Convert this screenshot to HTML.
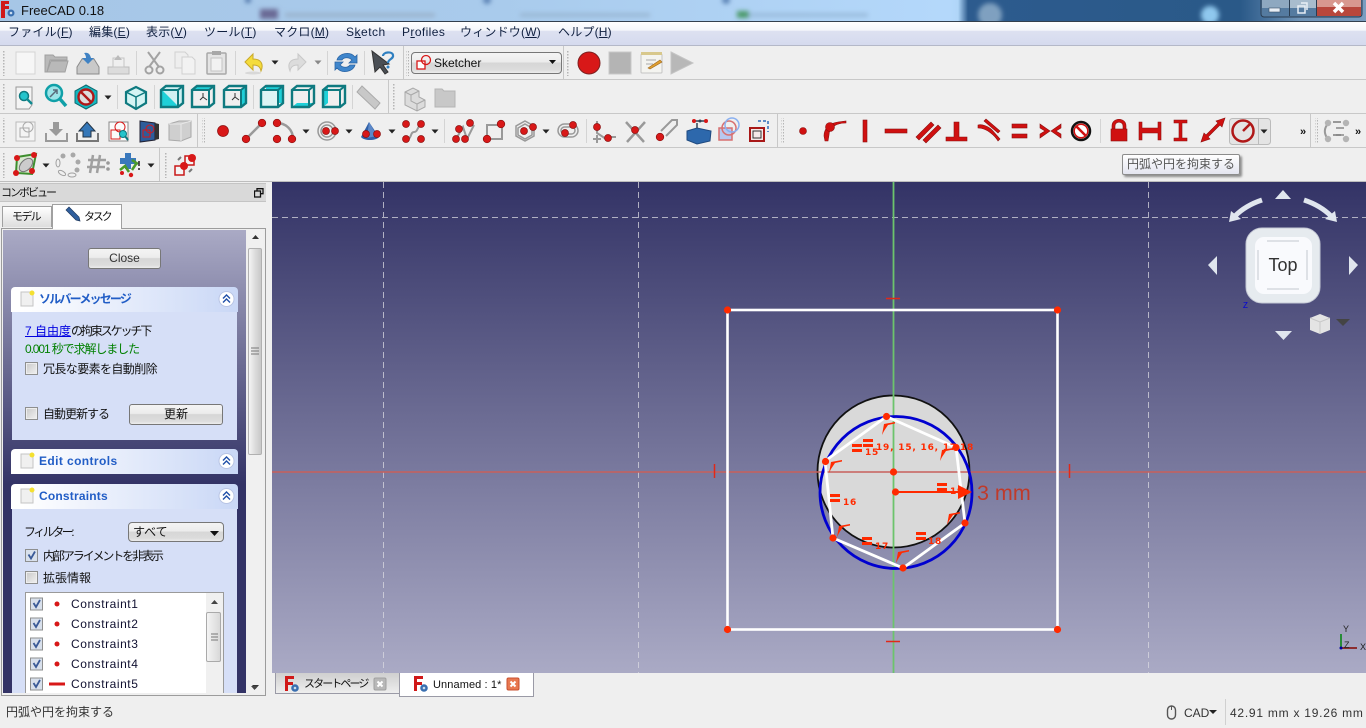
<!DOCTYPE html>
<html lang="ja"><head><meta charset="utf-8"><title>FreeCAD 0.18</title>
<style>
html,body{margin:0;padding:0;width:1366px;height:728px;overflow:hidden;background:#efefef}
body{position:relative;font-family:"Liberation Sans","Noto Sans CJK JP",sans-serif;font-size:12px;color:#111}
.a{position:absolute}
.t{position:absolute;white-space:nowrap;line-height:16px}
u{text-decoration:underline}
.m{color:#102040;letter-spacing:.2px}
.btn{position:absolute;box-sizing:border-box;border:1px solid #777;border-radius:3px;background:linear-gradient(#f4f4f4,#ececec 45%,#d6d6d6 50%,#dcdcdc 85%,#ececec);text-align:center;font-size:12px}
.cb{position:absolute;box-sizing:border-box;width:13px;height:13px;border:1px solid #8e8f8f;background:linear-gradient(135deg,#c8c8c8,#f2f2f2);outline:1px solid #eee;outline-offset:-2px}
.hd{position:absolute;left:11px;width:227px;height:25px;box-sizing:border-box;background:linear-gradient(90deg,#fff 5%,#c9d7f6);border-radius:4px 4px 0 0;color:#215dc6;font-weight:bold;font-size:12px;line-height:24px;padding-left:28px}
.bd{position:absolute;left:12px;width:225px;background:#d6dff7}
.c{font-size:12px;letter-spacing:.55px;color:#101030}
</style></head><body>

<!-- title bar -->
<div class="a" style="left:0;top:0;width:1366px;height:21px;background:linear-gradient(90deg,#a6c6e6 0,#a9cbec 500px,#b4d8fb 950px,#b0d6f8 958px,#2d5b8e 968px,#2a5988 1240px,#6f94b8 1300px,#7a9dc0 1366px)"></div>
<svg class="a" style="left:0;top:0" width="1366" height="21" viewBox="0 0 1366 21">
<defs><filter id="bl"><feGaussianBlur stdDeviation="2.500"/></filter></defs>
<g filter="url(#bl)">
<rect x="260" y="9" width="18" height="10" fill="#6a6a95"/>
<rect x="285" y="13" width="150" height="4" fill="#9ab2cc"/>
<rect x="520" y="13" width="130" height="4" fill="#9ab8d4"/>
<rect x="738" y="13" width="130" height="4" fill="#9abcdc"/>
<rect x="737" y="11" width="12" height="7" fill="#4b9a6b"/>
<circle cx="990" cy="15" r="12" fill="#7fa0c0"/>
<circle cx="1210" cy="15" r="9" fill="#8fc8ee"/>
<circle cx="248" cy="0" r="3" fill="#4a70a5"/><circle cx="487" cy="0" r="4" fill="#5b83b5"/><circle cx="726" cy="0" r="4" fill="#5b83b5"/>
</g>
<rect x="1261" y="-3" width="101" height="20" rx="3" fill="#557ba0" stroke="#2a3d52"/>
<rect x="1262" y="0" width="28" height="8" fill="#8ea8c0"/><rect x="1290" y="0" width="27" height="8" fill="#a8bccd"/>
<rect x="1317" y="0" width="44" height="16" fill="#b8473c"/><rect x="1317" y="0" width="44" height="7" fill="#d8988f"/>
<line x1="1289.500" y1="0" x2="1289.500" y2="16" stroke="#2a3d52"/><line x1="1316.500" y1="0" x2="1316.500" y2="16" stroke="#2a3d52"/>
<rect x="1269" y="8" width="11" height="4" fill="#e8eef5" stroke="#3a5068" stroke-width=".6"/>
<rect x="1298" y="6" width="7" height="7" fill="none" stroke="#e8eef5" stroke-width="1.500"/><path d="M1301 3h6v7" fill="none" stroke="#e8eef5" stroke-width="1.500"/>
<path d="M1334 3l9 9M1343 3l-9 9" stroke="#fff" stroke-width="3.500"/>
<path d="M1 1h8v3H5v2h4v3H5v9H1z" fill="#d01818"/><circle cx="11" cy="13" r="3.500" fill="#3a70b0"/><circle cx="11" cy="13" r="1.300" fill="#cde"/>
</svg>
<div class="t" style="left:21px;top:3px;font-size:13px;color:#111">FreeCAD 0.18</div>
<div class="a" style="left:0;top:21px;width:1366px;height:1px;background:#33404f"></div>

<!-- menu -->
<div class="a" style="left:0;top:22px;width:1366px;height:23px;background:linear-gradient(#fff,#f4f6fb 36%,#dde1f1 40%,#d5daee)"></div>
<div class="a" style="left:0;top:45px;width:1366px;height:1px;background:#b4b8c8"></div>
<div class="t m" style="left:8px;top:24px">ファイル(<u>F</u>)</div>
<div class="t m" style="left:89px;top:24px">編集(<u>E</u>)</div>
<div class="t m" style="left:146px;top:24px">表示(<u>V</u>)</div>
<div class="t m" style="left:204px;top:24px">ツール(<u>T</u>)</div>
<div class="t m" style="left:274px;top:24px">マクロ(<u>M</u>)</div>
<div class="t m" style="left:346px;top:24px;letter-spacing:.5px">S<u>k</u>etch</div>
<div class="t m" style="left:402px;top:24px;letter-spacing:.4px">P<u>r</u>ofiles</div>
<div class="t m" style="left:460px;top:24px">ウィンドウ(<u>W</u>)</div>
<div class="t m" style="left:558px;top:24px">ヘルプ(<u>H</u>)</div>

<!-- toolbars -->
<svg class="a" style="left:0;top:46px" width="1366" height="136" viewBox="0 46 1366 136">
<defs>
<pattern id="hp" width="3" height="3" patternUnits="userSpaceOnUse"><rect width="1.500" height="1.500" fill="#b5b5b5"/></pattern>
<g id="arr"><path d="M-3.500-1.500h7L0 2.500z" fill="#222"/></g>
<g id="grr"><path d="M-3.500-1.500h7L0 2.500z" fill="#888"/></g>
<g id="cube"><path d="M-11-7L-6-11H11V6L6 10H-11z" fill="none" stroke="#0f7a80" stroke-width="2.400"/><path d="M-11-7H6V10M6-7L11-11" fill="none" stroke="#0f7a80" stroke-width="2"/></g>
</defs>
<rect x="0" y="79" width="1366" height="1" fill="#c8c8c8"/>
<rect x="0" y="113" width="1366" height="1" fill="#c8c8c8"/>
<rect x="0" y="147" width="1366" height="1" fill="#c8c8c8"/>
<rect x="0" y="181" width="1366" height="1" fill="#bdbdbd"/>
<g fill="#c8c8c8">
<rect x="403" y="46" width="1" height="33"/><rect x="563" y="46" width="1" height="33"/>
<rect x="388" y="80" width="1" height="33"/><rect x="197" y="114" width="1" height="33"/>
<rect x="777" y="114" width="1" height="33"/><rect x="1310" y="114" width="1" height="33"/><rect x="159" y="148" width="1" height="33"/>
</g>
<g fill="url(#hp)">
<rect x="3" y="50" width="3" height="26"/><rect x="406" y="50" width="3" height="26"/><rect x="567" y="50" width="3" height="26"/>
<rect x="3" y="84" width="3" height="26"/><rect x="392" y="84" width="3" height="26"/>
<rect x="3" y="118" width="3" height="26"/><rect x="202" y="118" width="3" height="26"/><rect x="781" y="118" width="3" height="26"/><rect x="1315" y="118" width="3" height="26"/>
<rect x="3" y="152" width="3" height="26"/><rect x="164" y="152" width="3" height="26"/>
</g>
<g fill="#d4d4d4">
<rect x="136" y="51" width="1" height="24"/><rect x="235" y="51" width="1" height="24"/><rect x="327" y="51" width="1" height="24"/><rect x="364" y="51" width="1" height="24"/>
<rect x="117" y="85" width="1" height="24"/><rect x="154" y="85" width="1" height="24"/><rect x="253" y="85" width="1" height="24"/><rect x="352" y="85" width="1" height="24"/>
<rect x="444" y="119" width="1" height="24"/><rect x="586" y="119" width="1" height="24"/><rect x="1100" y="119" width="1" height="24"/>
</g>

<!-- row 1 -->
<rect x="16" y="52" width="19" height="22" fill="#f6f6f6" stroke="#d4d4d4"/>
<path d="M45 72V55h8l2 2h12v3H50l-3 12zM47 72l4-11h17l-3 11z" fill="#b9b9b9" stroke="#a0a0a0"/>
<path d="M77 67l5-8h12l5 8v7H77z" fill="#c9c9c9" stroke="#8b8b8b"/><path d="M84 53c4-1 6 1 7 5h3l-6 6-6-6h4c0-2-1-4-2-5z" fill="#3f82c4"/>
<path d="M108 67h21v7h-21z" fill="#dcdcdc" stroke="#bbb"/><path d="M113 58h11v9h-11z" fill="#efefef" stroke="#c4c4c4"/><path d="M118 55l4 5h-8z" fill="#bbb"/>
<g fill="none" stroke="#a3a3a3" stroke-width="2"><path d="M148 52l11 15M160 52l-11 15"/><circle cx="149" cy="70" r="3.500"/><circle cx="160" cy="70" r="3.500"/></g>
<path d="M175 52h10l3 3v13h-13z" fill="#eee" stroke="#d0d0d0"/><path d="M182 57h10l3 3v14h-13z" fill="#f2f2f2" stroke="#d0d0d0"/>
<rect x="207" y="53" width="19" height="21" rx="1" fill="#e4e4e4" stroke="#a8a8a8" stroke-width="1.500"/><rect x="211" y="58" width="11" height="13" fill="#f2f2f2" stroke="#c4c4c4"/><rect x="212" y="51" width="9" height="4" fill="#a8a8a8"/>
<path d="M245 62l8-8v5c8 0 11 5 8 12-1-5-4-6-8-6v5z" fill="#f4dc3c" stroke="#c9a92a"/><ellipse cx="253" cy="73" rx="8" ry="1.500" fill="#d8d8d8"/>
<use href="#arr" x="275" y="62"/>
<path d="M306 62l-8-8v5c-8 0-11 5-8 12 1-5 4-6 8-6v5z" fill="#dcdcdc" stroke="#c8c8c8"/>
<use href="#grr" x="318" y="62"/>
<path d="M337 60c2-7 13-9 18-3l2-2v8h-8l3-3c-3-3-8-3-10 0zM355 65c-2 7-13 9-18 3l-2 2v-8h8l-3 3c3 3 8 3 10 0z" fill="#3f86cc" stroke="#2a64a4" stroke-width=".8"/>
<path d="M372 51l3 21 5-5 5 7 3-2-5-7 6-1z" fill="#4a4f55" stroke="#333"/><path d="M383 56c0-4 9-5 10-1 1 4-5 4-5 8" fill="none" stroke="#2f7fc0" stroke-width="2.200"/><circle cx="388" cy="67" r="1.500" fill="#2f7fc0"/>
<circle cx="589" cy="63" r="11" fill="#d81818" stroke="#7d2020"/>
<rect x="609" y="52" width="22" height="22" fill="#b4b4b4" stroke="#c8c8c8"/>
<rect x="641" y="54" width="21" height="19" rx="1" fill="#f4f4f0" stroke="#c4c4c4"/><rect x="641" y="52" width="21" height="3" fill="#d8c88c"/><path d="M646 60h10M646 64h7" stroke="#aaa"/><path d="M648 68l12-8 2 2-12 7z" fill="#e0a030" stroke="#a06a20" stroke-width=".6"/>
<path d="M671 52l22 11-22 11z" fill="#b8b8b8" stroke="#c4c4c4"/>

<!-- row 2 -->
<path d="M16 87h16v18l-3 4H16z" fill="#f4f4f4" stroke="#999"/><circle cx="24" cy="96" r="4.500" fill="#25c4cc" stroke="#0f7a80" stroke-width="1.500"/><path d="M27 99l5 5" stroke="#0f8a90" stroke-width="2.500"/>
<circle cx="54" cy="93" r="8" fill="#9ce4e8" stroke="#10a0a8" stroke-width="2.500"/><path d="M60 99l6 7" stroke="#10a0a8" stroke-width="3.500"/><path d="M50 97l7-7M53 90h4v4" stroke="#5a6a7a" fill="none" stroke-width="1.500"/>
<path d="M86 85l11 6v12l-11 6-11-6V91z" fill="#12b8c0" stroke="#0f6a70"/><circle cx="86" cy="97" r="7.500" fill="#ddd" stroke="#b01818" stroke-width="2.400"/><path d="M81 92l10 10" stroke="#b01818" stroke-width="2.400"/>
<use href="#arr" x="108" y="97"/>
<path d="M136 87l10 5v11l-10 6-10-6V92z" fill="#d4f4f4" stroke="#0f7a80" stroke-width="2.200"/><path d="M136 97l-10-5M136 97l10-5M136 97v12" stroke="#0f7a80" stroke-width="1.500"/>
<g transform="translate(172 97)"><path d="M-10-7H7V10H-10z" fill="#1fd0d8"/><path d="M-10-7L-5-11H11V6L7 10" fill="#d0f0f2"/><use href="#cube"/></g>
<g transform="translate(203 97)"><path d="M-11-7L-6-11H11L6-7z" fill="#1fd0d8"/><use href="#cube"/><path d="M-3 3l3-3 4 3M0 0v-4" stroke="#333" fill="none"/></g>
<g transform="translate(235 97)"><path d="M6-7L11-11V6L6 10z" fill="#1fd0d8"/><use href="#cube"/><path d="M-3 3l3-3 4 3M0 0v-4" stroke="#333" fill="none"/></g>
<g transform="translate(272 97)"><path d="M-6-11H11V6H-6z" fill="#1fd0d8"/><rect x="-11" y="-7" width="17" height="17" fill="#ddf4f4"/><use href="#cube"/></g>
<g transform="translate(303 97)"><path d="M-11 10L-6 6H11L6 10z" fill="#1fd0d8"/><use href="#cube"/></g>
<g transform="translate(334 97)"><path d="M-11-7L-6-11V6L-11 10z" fill="#1fd0d8"/><use href="#cube"/></g>
<path d="M362 86l18 17-5 6-18-17z" fill="#c8c8c8" stroke="#aaa"/>
<path d="M405 92l8-4 6 3v6l6 3v7l-8 4-12-6z" fill="#dcdcdc" stroke="#a8a8a8"/><path d="M405 92l6 3v6l6 3v7M411 95l8-4M417 104l8-4" fill="none" stroke="#a8a8a8"/>
<path d="M435 89h7l2 2h11v16h-20z" fill="#c8c8c8" stroke="#b4b4b4"/>

<!-- row 3 -->
<rect x="16" y="122" width="19" height="19" fill="#f4f4f4" stroke="#bbb"/><rect x="20" y="128" width="9" height="9" fill="none" stroke="#aaa"/><circle cx="28" cy="127" r="5" fill="none" stroke="#aaa"/>
<path d="M53 122h6v7h4l-7 7-7-7h4z" fill="#9a9a9a"/><path d="M46 133v8h21v-8" fill="none" stroke="#9a9a9a" stroke-width="2"/>
<path d="M83 131h-4l8-9 8 9h-4v6h-8z" fill="#3577b8" stroke="#234"/><path d="M77 133v8h21v-8" fill="none" stroke="#777" stroke-width="2"/>
<rect x="109" y="122" width="19" height="19" fill="#fbfbfb" stroke="#888"/><rect x="111" y="130" width="9" height="9" fill="none" stroke="#d81818"/><circle cx="120" cy="127" r="5" fill="none" stroke="#d81818"/><circle cx="123" cy="134" r="3.500" fill="#25c4cc" stroke="#0f7a80"/><path d="M125 136l3 4" stroke="#0f7a80" stroke-width="2"/>
<path d="M140 121l15 2v17l-15 2z" fill="#2e5c9a" stroke="#223"/><path d="M155 123l4 1v15l-4 1z" fill="#333"/><rect x="143" y="130" width="7" height="7" fill="none" stroke="#d81818"/><circle cx="150" cy="129" r="4" fill="none" stroke="#d81818"/>
<path d="M169 124l10-3h12v16l-10 4-12-1z" fill="#cfcfcf" stroke="#aaa"/><path d="M169 124h12v17M181 124l10-3" fill="none" stroke="#e8e8e8"/>
<g stroke="#999" fill="none" stroke-width="1.500">
<path d="M246 139l16-16" stroke-width="2.500"/><path d="M277 123c8 0 16 6 16 16" stroke-width="2.500"/>
<circle cx="327" cy="131" r="9" stroke-width="1.500"/><circle cx="327" cy="131" r="6"/>
<path d="M407 139c5 0 3-7 7-7s3-5 7-8" stroke-width="2"/>
<path d="M456 139l7-12 4 12 7-14" stroke-width="2"/><rect x="487" y="125" width="15" height="14" stroke-width="2"/>
<path d="M525 121l9 5v10l-9 5-9-5v-10z"/><path d="M525 124l7 4v7l-7 4-7-4v-7z"/>
<rect x="558" y="124" width="20" height="13" rx="6.500"/><rect x="561" y="127" width="14" height="7" rx="3.500"/>
<path d="M597 121v12l9 6M593 139h8M597 135v8" stroke-width="2"/><path d="M607 137h9" stroke-width="2"/>
<path d="M626 122l18 20M645 122l-18 20" stroke-width="2.500"/>
<path d="M661 131l11-11h5v5l-11 11" stroke-width="2"/>
</g>
<path d="M369 122l-8 15c3 4 15 4 18 0z" fill="#3060a8"/><path d="M369 122l-2 16 10-2z" fill="#5c88c8"/>
<g fill="#d81818" stroke="#8a1010" stroke-width=".7">
<circle cx="223" cy="131" r="5.500"/><circle cx="246" cy="139" r="3.800"/><circle cx="262" cy="123" r="3.800"/>
<circle cx="277" cy="123" r="3.800"/><circle cx="277" cy="139" r="3.800"/><circle cx="292" cy="139" r="3.800"/>
<circle cx="326" cy="131" r="3.500"/><circle cx="335" cy="131" r="3.500"/>
<circle cx="366" cy="134" r="3.500"/><circle cx="377" cy="134" r="3.500"/>
<circle cx="406" cy="139" r="3.500"/><circle cx="406" cy="124" r="3.500"/><circle cx="421" cy="124" r="3.500"/><circle cx="421" cy="139" r="3.500"/>
<circle cx="456" cy="139" r="3.500"/><circle cx="459" cy="129" r="3.500"/><circle cx="470" cy="123" r="3.500"/><circle cx="465" cy="139" r="3.500"/>
<circle cx="487" cy="139" r="3.800"/><circle cx="501" cy="124" r="3.800"/>
<circle cx="524" cy="131" r="3.500"/><circle cx="533" cy="127" r="3.500"/>
<circle cx="565" cy="133" r="3.500"/><circle cx="573" cy="125" r="3.500"/>
<circle cx="597" cy="127" r="3.500"/><circle cx="608" cy="138" r="3.500"/>
<circle cx="635" cy="130" r="3.500"/><circle cx="660" cy="137" r="3.800"/>
</g>
<path d="M687 131l10-3 14 3-1 10-13 3-10-4z" fill="#2d68ac" stroke="#1f4a80"/><path d="M697 128v-5M692 121h14" stroke="#345" stroke-width="1.500"/><circle cx="694" cy="121" r="2" fill="#d81818"/><circle cx="706" cy="121" r="2" fill="#d81818"/><circle cx="700" cy="121" r="1.500" fill="#345"/>
<rect x="719" y="128" width="13" height="12" fill="#b8c8f0" stroke="#d87070" stroke-width="1.500"/><circle cx="729" cy="128" r="7" fill="none" stroke="#d87070" stroke-width="1.500"/><circle cx="732" cy="125" r="7" fill="none" stroke="#8ab0f0" stroke-width="1.500"/>
<rect x="750" y="128" width="14" height="13" fill="#f4e8e8" stroke="#a81818" stroke-width="2"/><rect x="753" y="131" width="8" height="7" fill="none" stroke="#333"/><path d="M758 121h10v11" fill="none" stroke="#2e6cb8" stroke-width="1.500" stroke-dasharray="3 2"/>
<use href="#arr" x="306" y="131"/><use href="#arr" x="349" y="131"/><use href="#arr" x="392" y="131"/><use href="#arr" x="435" y="131"/><use href="#arr" x="546" y="131"/>

<!-- constraints -->
<g fill="#d01010" stroke="#8a1010" stroke-width=".6">
<circle cx="803" cy="131" r="3.500"/>
<path d="M825 141l-1-5c0-8 6-13 14-14l8-1v2c-9 0-17 4-17 12l-1 6z"/><circle cx="830" cy="127" r="4.500"/>
<rect x="863" y="120" width="4" height="22"/>
<rect x="885" y="129" width="22" height="4"/>
<path d="M916 137l15-15 3 3-15 15zM923 140l15-15 3 3-15 15z" />
<path d="M946 137h8v-15h5v15h8v4h-21z"/>
<path d="M978 125c4-1 10 1 14 5l8 9-2 2c-3-5-11-13-20-13z"/><path d="M984 121l14 12 2-2-14-12z"/>
<rect x="1012" y="124" width="15" height="4"/><rect x="1012" y="134" width="15" height="4"/>
<path d="M1040 124l10 7-10 7v-4l5-3-5-3zM1061 124l-10 7 10 7v-4l-5-3 5-3z"/>
</g>
<circle cx="1081" cy="131" r="9" fill="#fff" stroke="#111" stroke-width="2.500"/><circle cx="1081" cy="131" r="6.800" fill="none" stroke="#d01010" stroke-width="1.500"/><path d="M1076 126l10 10" stroke="#d01010" stroke-width="2.500"/>
<g fill="#d01010" stroke="#8a1010" stroke-width=".6">
<path d="M1112 129v-3c0-9 14-9 14 0v3h-3v-3c0-5-8-5-8 0v3z"/><rect x="1111" y="129" width="16" height="12"/>
<path d="M1139 122h3v6h16v-6h3v18h-3v-7h-16v7h-3z"/>
<path d="M1174 120h13v3h-5v15h5v3h-13v-3h5v-15h-5z"/>
<path d="M1201 142l3-9 2 2 12-12-2-2 9-3-3 9-2-2-12 12 2 2z"/>
</g>
<rect x="1229.500" y="118.500" width="41" height="26" rx="3" fill="#e4e4e4" stroke="#bbb"/><line x1="1258.500" y1="118" x2="1258.500" y2="145" stroke="#bbb"/>
<circle cx="1243" cy="131" r="10.500" fill="none" stroke="#b01818" stroke-width="2.500"/><path d="M1243 131l8-8" stroke="#b01818" stroke-width="2.500"/>
<use href="#arr" x="1264" y="131"/>
<g fill="none" stroke="#999" stroke-width="2"><path d="M1327 125c-3 4-3 8 0 13M1333 122h8M1333 135h8" /></g>
<g fill="#b4b4b4"><circle cx="1328" cy="123" r="3.200"/><circle cx="1346" cy="123" r="3.200"/><circle cx="1328" cy="139" r="3.200"/><circle cx="1346" cy="139" r="3.200"/></g>
<path d="M1336 128h8M1336 135h8" stroke="#888" stroke-width="1.500"/>

<!-- row 4 -->
<path d="M17 157l19-3-4 20-16-1z" fill="#d8e8d0" stroke="#3e8e2e" stroke-width="2"/><ellipse cx="26" cy="165" rx="8" ry="5" transform="rotate(-45 26 165)" fill="#ccc" stroke="#777"/>
<g fill="#d81818"><circle cx="17" cy="158" r="3"/><circle cx="34" cy="155" r="3"/><circle cx="32" cy="171" r="3"/><circle cx="16" cy="173" r="3"/></g>
<use href="#arr" x="46" y="165"/>
<g fill="#f0f0f0" stroke="#a0a0a0"><ellipse cx="58" cy="163" rx="2" ry="4"/><ellipse cx="62" cy="173" rx="4" ry="2" transform="rotate(30 62 173)"/><ellipse cx="72" cy="175" rx="4" ry="2"/></g>
<g fill="#a8a8a8"><circle cx="63" cy="156" r="2.500"/><circle cx="73" cy="155" r="2.500"/><circle cx="78" cy="162" r="2.500"/><circle cx="77" cy="170" r="2.500"/></g>
<path d="M93 155l-3 18M100 155l-3 18M88 160h18M87 167h18" stroke="#a0a0a0" stroke-width="2.500"/><circle cx="108" cy="163" r="1.800" fill="#999"/><circle cx="108" cy="169" r="1.800" fill="#999"/>
<path d="M125 153h6v5h5v6h-5v5h-6v-5h-5v-6h5z" fill="#3a78bc"/><path d="M120 170l5-4 4 6M132 160l6 4M132 170l4-6" stroke="#4a9a2a" stroke-width="2.500" fill="none"/><circle cx="131" cy="175" r="2.200" fill="#d81818"/><circle cx="122" cy="173" r="2" fill="#d81818"/><path d="M139 161v5" stroke="#222" stroke-width="1.500"/><circle cx="139" cy="169" r="1" fill="#222"/>
<use href="#arr" x="151" y="165"/>
<rect x="175" y="166" width="9" height="9" fill="#f4f4f4" stroke="#c81818" stroke-width="1.500"/><rect x="185" y="156" width="9" height="9" fill="#f4f4f4" stroke="#c81818" stroke-width="1.500"/><circle cx="184" cy="166" r="4" fill="#d81818"/><circle cx="192" cy="158" r="4" fill="#d81818"/><path d="M178 160l3-3M189 172l3-3" stroke="#777" stroke-width="2"/>
<g font-family="Liberation Sans" font-weight="bold" font-size="11"><text x="1300" y="135" fill="#111">»</text><text x="1355" y="135" fill="#111">»</text></g>
</svg>

<!-- workbench combo -->
<div class="btn" style="left:411px;top:52px;width:151px;height:22px;border-radius:4px;text-align:left;padding-left:22px;line-height:20px">Sketcher</div>
<svg class="a" style="left:415px;top:54px" width="150" height="18" viewBox="415 54 150 18"><rect x="417" y="61" width="8" height="8" fill="#fff" stroke="#d81818" stroke-width="1.300"/><circle cx="426" cy="60" r="4.500" fill="none" stroke="#d81818" stroke-width="1.300"/><path d="M549 60h7l-3.500 4z" fill="#111"/></svg>

<!-- viewport -->
<div class="a" style="left:272px;top:182px;width:1094px;height:491px;background:linear-gradient(#333366,#aaaac5)"></div>
<svg class="a" style="left:272px;top:182px" width="1094" height="491" viewBox="272 182 1094 491">
<defs>
<path id="eq" d="M0 0h10v3H0zM0 5h10v3H0z"/>
<path id="pm" d="M0 13L2 2 13 0V1.500L6 3 2 9z"/>
</defs>
<g stroke="#d8d8e0" stroke-width="1" stroke-dasharray="6 4" fill="none" opacity=".75">
<path d="M272 217.500H1366"/><path d="M383.500 182V673M638.500 182V673M1148.500 182V673"/>
</g>
<circle cx="893.500" cy="471.500" r="76" fill="#d9d9d9" stroke="#111" stroke-width="1.800"/>
<path d="M272 472H1366" stroke="#c8605c" stroke-width="1.500"/>
<path d="M893.500 182V673" stroke="#6cc46c" stroke-width="1.800"/>
<rect x="727.500" y="310" width="330" height="319.500" fill="none" stroke="#fff" stroke-width="2.600"/>
<path d="M886 298.500h14M886 641.500h14M714.500 464v14M1069.500 464v14" stroke="#e02818" stroke-width="1.500"/>
<circle cx="896" cy="492.500" r="76" fill="none" stroke="#0000d0" stroke-width="2.800"/>
<path d="M886.500 416.500L956 447.500 965 523 903 568 833 538 825 461z" fill="none" stroke="#fff" stroke-width="2.800"/>
<g fill="#ff2a00">
<circle cx="727.500" cy="310" r="3.600"/><circle cx="1057.500" cy="310" r="3.600"/><circle cx="727.500" cy="629.500" r="3.600"/><circle cx="1057.500" cy="629.500" r="3.600"/>
<circle cx="886.500" cy="416.500" r="3.600"/><circle cx="956" cy="447.500" r="3.600"/><circle cx="965" cy="523" r="3.600"/><circle cx="903" cy="568" r="3.600"/><circle cx="833" cy="538" r="3.600"/><circle cx="825.500" cy="461.500" r="3.600"/>
<circle cx="893.500" cy="472" r="3.600"/><circle cx="895.500" cy="492" r="3.600"/>
<path d="M958 485l14 7-14 7z"/>
<use href="#eq" x="863" y="439"/><use href="#eq" x="852" y="444"/><use href="#eq" x="830" y="494"/><use href="#eq" x="862" y="537"/><use href="#eq" x="916" y="532"/><use href="#eq" x="937" y="483"/>
<use href="#pm" x="882" y="422"/><use href="#pm" x="940" y="448"/><use href="#pm" x="829" y="460"/><use href="#pm" x="837" y="524"/><use href="#pm" x="896" y="550"/><use href="#pm" x="947" y="512"/>
</g>
<path d="M895.500 492H960" stroke="#ff2a00" stroke-width="2"/>
<g font-family="DejaVu Sans,Liberation Sans" font-weight="bold" font-size="9" fill="#ff2a00" letter-spacing=".8">
<text x="865" y="455">15</text><text x="876" y="450">19, 15, 16, 17</text><text x="960" y="450">18</text><text x="843" y="505">16</text><text x="875" y="549">17</text><text x="928" y="544">18</text><text x="950" y="494">19</text>
</g>
<text x="977" y="500" font-family="Liberation Sans" font-size="21.500" fill="#c03a2a">3 mm</text>

<!-- navicube -->
<rect x="1246" y="228" width="74" height="75" rx="16" fill="#e6ebef" stroke="#c4c8d4"/>
<rect x="1255" y="237" width="57" height="57" rx="9" fill="#f9fafd"/>
<g stroke="#c4c8d0" fill="none"><path d="M1267 241h32M1267 289h32" /><path d="M1258 250v30M1307 250v30"/></g>
<text x="1283" y="271" text-anchor="middle" font-family="Liberation Sans" font-size="18" fill="#333">Top</text>
<g fill="#e0e6ee">
<path d="M1275 199l8-9 8 9z"/><path d="M1275 331h17l-8.500 9z"/><path d="M1217 256l-9 9 9 10z"/><path d="M1349 256l9 9-9 10z"/>
<path d="M1229 222l2-11 10 8z"/><path d="M1337 222l-2-11-10 8z"/>
</g>
<path d="M1262 200C1250 204 1242 209 1235 216M1304 200C1316 204 1324 209 1331 216" fill="none" stroke="#e0e6ee" stroke-width="5"/>
<text x="1243" y="308" font-family="Liberation Sans" font-size="8" fill="#0000d8">Z</text>
<path d="M1310 318l10-4 10 4v12l-10 4-10-4z" fill="#e4e4e4"/><path d="M1310 318l10 4 10-4M1320 322v12" stroke="#c8c8c8" fill="none"/>
<path d="M1336 319h14l-7 7z" fill="#444"/>
<!-- axis cross -->
<path d="M1341 648v-14" stroke="#1a8a2a" stroke-width="1.800"/><path d="M1341 648h16" stroke="#8a2020" stroke-width="1.800"/><circle cx="1341" cy="648" r="1.500" fill="#0000a0"/>
<g font-family="Liberation Sans" font-size="9" fill="#222"><text x="1343" y="632">Y</text><text x="1360" y="650">X</text><text x="1344" y="648">Z</text></g>
</svg>

<!-- tooltip -->
<div class="a" style="left:1122px;top:154px;width:118px;height:21px;box-sizing:border-box;border:1px solid #8c8c8c;border-radius:2px;background:linear-gradient(#fff,#e4e5f0);box-shadow:2px 2px 2px rgba(60,60,60,.55);font-size:12px;line-height:19px;color:#555;text-align:center;white-space:nowrap">円弧や円を拘束する</div>

<!-- left panel -->
<div class="a" style="left:0;top:183px;width:266px;height:19px;background:#d9d9d9;border:1px solid #c4c4c4;border-width:1px 0;box-sizing:border-box"></div>
<div class="t" style="left:1px;top:185px;font-size:11px;letter-spacing:-2px">コンボビュー</div>
<svg class="a" style="left:254px;top:188px" width="10" height="10"><rect x=".5" y="3" width="6" height="6" fill="none" stroke="#111" stroke-width="1.300"/><path d="M3 2.500V.7h6v5H7" fill="none" stroke="#111" stroke-width="1.300"/></svg>
<div class="a" style="left:2px;top:206px;width:50px;height:21px;box-sizing:border-box;border:1px solid #a0a0a0;border-bottom:0;background:linear-gradient(#fff,#ddd)"></div>
<div class="t" style="left:12px;top:209px;font-size:11px;letter-spacing:-1.700px">モデル</div>
<div class="a" style="left:52px;top:204px;width:70px;height:25px;box-sizing:border-box;border:1px solid #a0a0a0;border-bottom:0;background:#fff;z-index:2"></div>
<svg class="a" style="left:64px;top:206px;z-index:3" width="18" height="18"><path d="M2 4l3-3 10 10 1 4-4-1z" fill="#2f5f9e" stroke="#1f3a60" stroke-width=".7"/></svg>
<div class="t" style="left:84px;top:209px;font-size:11px;letter-spacing:-2.200px;z-index:3">タスク</div>
<div class="a" style="left:1px;top:228px;width:265px;height:468px;box-sizing:border-box;border:1px solid #9c9c9c;background:#efefef"></div>
<div class="a" style="left:3px;top:230px;width:243px;height:463px;background:linear-gradient(#aaaac5,#333366 55%,#333366)"></div>
<!-- scrollbar -->
<div class="a" style="left:247px;top:230px;width:16px;height:463px;background:#f0f0f0"></div>
<div class="a" style="left:248px;top:248px;width:14px;height:207px;box-sizing:border-box;border:1px solid #b0b0b0;border-radius:2px;background:linear-gradient(90deg,#f4f4f4,#dcdcdc 50%,#c8c8c8)"></div>
<svg class="a" style="left:247px;top:230px" width="16" height="463"><path d="M5 9h7l-3.500-4z" fill="#333"/><path d="M5 455h7l-3.500 4z" fill="#333"/><path d="M4 118h8M4 121h8M4 124h8" stroke="#777"/></svg>

<div class="btn" style="left:88px;top:248px;width:73px;height:21px;line-height:19px;color:#333">Close</div>

<div class="hd" style="top:287px;letter-spacing:-1.800px">ソルバーメッセージ</div>
<div class="bd" style="top:312px;height:128px"></div>
<div class="t" style="left:25px;top:323px"><span style="color:#0000e0;text-decoration:underline">7 自由度</span><span style="letter-spacing:-2.100px">の拘束スケッチ下</span></div>
<div class="t" style="left:25px;top:341px;color:#008000;letter-spacing:-1.100px">0.001 秒で求解しました</div>
<div class="cb" style="left:25px;top:362px"></div>
<div class="t" style="left:43px;top:361px;letter-spacing:-.6px">冗長な要素を自動削除</div>
<div class="cb" style="left:25px;top:407px"></div>
<div class="t" style="left:43px;top:406px;letter-spacing:-1px">自動更新する</div>
<div class="btn" style="left:129px;top:404px;width:94px;height:21px;line-height:19px">更新</div>

<div class="hd" style="top:449px;letter-spacing:.4px">Edit controls</div>
<div class="hd" style="top:484px;letter-spacing:.2px">Constraints</div>
<div class="bd" style="top:509px;height:184px"></div>
<div class="t" style="left:24px;top:524px;letter-spacing:-2.500px">フィルター:</div>
<div class="btn" style="left:128px;top:522px;width:96px;height:20px;text-align:left;padding-left:4px;line-height:18px;border-radius:4px">すべて</div>
<div class="cb" style="left:25px;top:549px"></div>
<div class="t" style="left:43px;top:548px;letter-spacing:-2.100px">内部アライメントを非表示</div>
<div class="cb" style="left:25px;top:571px"></div>
<div class="t" style="left:43px;top:570px">拡張情報</div>
<div class="a" style="left:25px;top:592px;width:199px;height:101px;box-sizing:border-box;border:1px solid #9a9a9a;border-bottom:0;background:#fff"></div>
<div class="a" style="left:206px;top:593px;width:17px;height:100px;background:#f0f0f0"></div>
<div class="a" style="left:206px;top:612px;width:15px;height:50px;box-sizing:border-box;border:1px solid #aaa;border-radius:2px;background:linear-gradient(90deg,#f4f4f4,#d8d8d8)"></div>
<div class="t c" style="left:71px;top:596px">Constraint1</div>
<div class="t c" style="left:71px;top:616px">Constraint2</div>
<div class="t c" style="left:71px;top:636px">Constraint3</div>
<div class="t c" style="left:71px;top:656px">Constraint4</div>
<div class="t c" style="left:71px;top:676px">Constraint5</div>

<svg class="a" style="left:0;top:280px" width="266" height="416" viewBox="0 280 266 416">
<defs>
<g id="tog"><circle r="7.500" fill="#fff" stroke="#b8c4e4"/><path d="M-3.500-.5L0-4 3.500-.5M-3.500 3.500L0 0 3.500 3.500" fill="none" stroke="#1f4fa8" stroke-width="1.400"/></g>
<g id="pic"><rect x="-6" y="-7" width="12" height="14" fill="#f0f0f0" stroke="#c4c4c4"/><circle cx="5" cy="-6" r="2.500" fill="#f4e030"/></g>
<g id="chk"><rect x="-6" y="-6" width="12" height="12" fill="#d8e0ec" stroke="#8e8f8f"/><path d="M-3-1l2.500 4 4-7" fill="none" stroke="#3a5a98" stroke-width="1.800"/></g>
</defs>
<use href="#pic" x="27" y="299"/><use href="#pic" x="27" y="461"/><use href="#pic" x="27" y="496"/>
<use href="#tog" x="226.500" y="299"/><use href="#tog" x="226.500" y="461"/><use href="#tog" x="226.500" y="496"/>
<path d="M208 530h9l-4.500 5z" fill="#111" transform="translate(2 1)"/>
<use href="#chk" x="31.500" y="555.500"/>
<use href="#chk" x="36.500" y="604"/><use href="#chk" x="36.500" y="624"/><use href="#chk" x="36.500" y="644"/><use href="#chk" x="36.500" y="664"/><use href="#chk" x="36.500" y="684"/>
<g fill="#d81818"><circle cx="57" cy="604" r="2.500"/><circle cx="57" cy="624" r="2.500"/><circle cx="57" cy="644" r="2.500"/><circle cx="57" cy="664" r="2.500"/><rect x="49" y="682.500" width="16" height="3"/></g>
<path d="M211 604h7l-3.500-4z" fill="#444"/><path d="M211 683h7l-3.500 4z" fill="#444" transform="translate(40 3)"/>
<path d="M211 634h7M211 637h7M211 640h7" stroke="#777"/>
</svg>

<!-- document tabs -->
<div class="a" style="left:275px;top:673px;width:125px;height:21px;box-sizing:border-box;border:1px solid #9a9aa6;border-top:0;background:linear-gradient(#cfcfcf,#eee)"></div>
<div class="a" style="left:399px;top:673px;width:135px;height:24px;box-sizing:border-box;border:1px solid #9a9aa6;border-top:0;background:#fff"></div>
<svg class="a" style="left:280px;top:674px" width="240" height="20" viewBox="280 674 240 20">
<path d="M285 676h9v3h-6v3h5v3h-5v6h-3z" fill="#d01818"/><circle cx="295" cy="688" r="3.800" fill="#3a6fb0"/><circle cx="295" cy="688" r="1.300" fill="#cde"/>
<path d="M414 676h9v3h-6v3h5v3h-5v6h-3z" fill="#d01818"/><circle cx="424" cy="688" r="3.800" fill="#3a6fb0"/><circle cx="424" cy="688" r="1.300" fill="#cde"/>
<rect x="374" y="678" width="12" height="12" rx="1.500" fill="#b8b8b8" stroke="#a0a0a0"/><path d="M377.500 681.500l5 5M382.500 681.500l-5 5" stroke="#fff" stroke-width="2"/>
<rect x="507" y="678" width="12" height="12" rx="1.500" fill="#e87850" stroke="#c85030"/><path d="M510.500 681.500l5 5M515.500 681.500l-5 5" stroke="#fff" stroke-width="2"/>
</svg>
<div class="t" style="left:304px;top:676px;font-size:11px;letter-spacing:-1.900px">スタートページ</div>
<div class="t" style="left:433px;top:677px;font-size:11px;letter-spacing:.1px">Unnamed : 1*</div>

<!-- status bar -->
<div class="t" style="left:6px;top:704px;color:#333">円弧や円を拘束する</div>
<svg class="a" style="left:1165px;top:703px" width="60" height="20"><rect x="2.500" y="3" width="8" height="13" rx="4" fill="none" stroke="#555" stroke-width="1.400"/><path d="M6.500 3v4" stroke="#555"/><path d="M44 7h8l-4 4z" fill="#222" /></svg>
<div class="t" style="left:1184px;top:705px;color:#333">CAD</div>
<div class="a" style="left:1225px;top:699px;width:1px;height:26px;background:#d0d0d0"></div>
<div class="t" style="left:1230px;top:705px;color:#333;letter-spacing:.75px">42.91 mm x 19.26 mm</div>
</body></html>
